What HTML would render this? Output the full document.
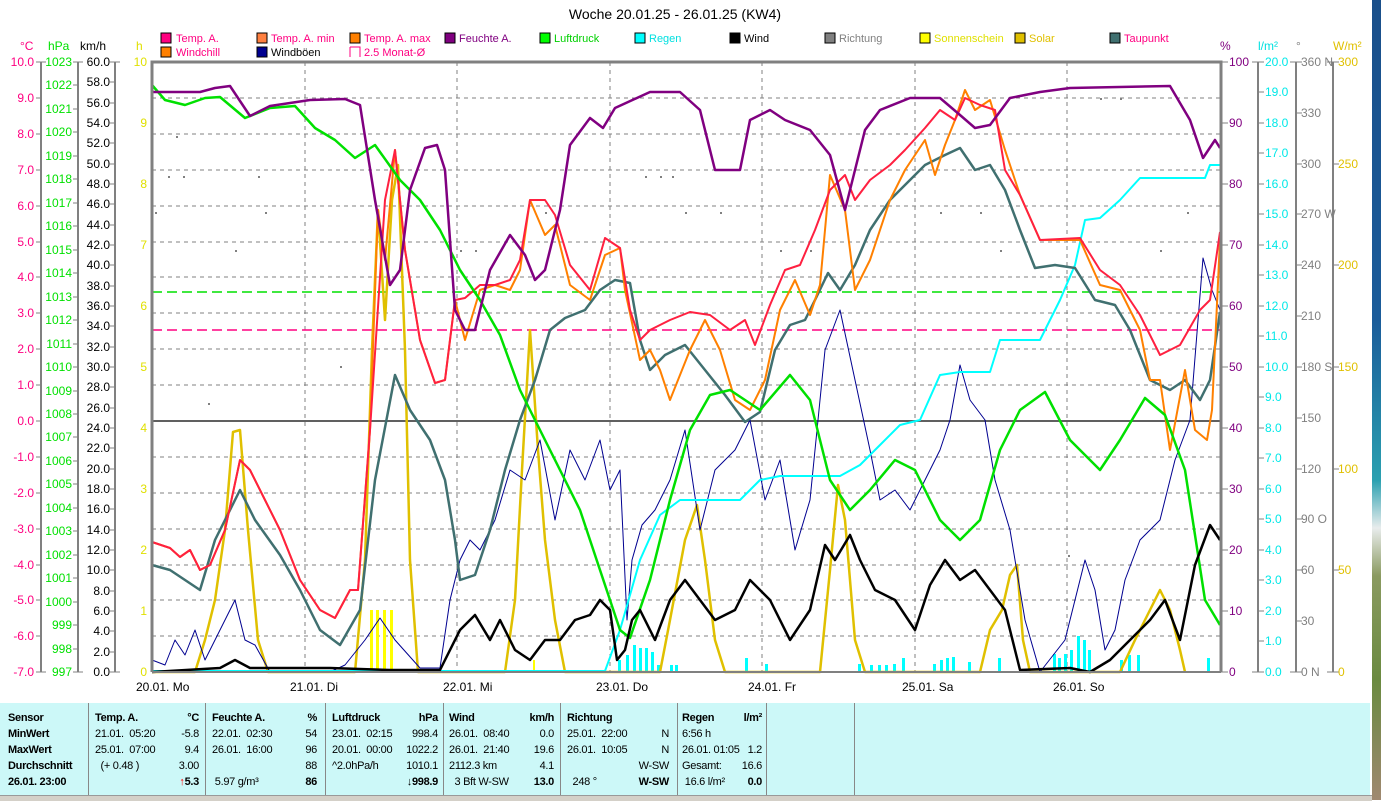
<!DOCTYPE html>
<html><head><meta charset="utf-8"><style>
html,body{margin:0;padding:0;width:1381px;height:800px;overflow:hidden;background:#fff;font-family:"Liberation Sans",sans-serif}
#strip{position:absolute;left:1372px;top:0;width:9px;height:800px;background:linear-gradient(#1a4f8a 0%,#1b5c9a 40%,#2aa0b0 60%,#e8ecec 66%,#8a9a60 72%,#6a8a40 85%,#a08870 100%)}
#tbl{position:absolute;left:0;top:703px;width:1370px;height:92px;background:#ccf8f8}
#bar{position:absolute;left:0;top:795px;width:1372px;height:5px;background:#d4d0c8;border-top:1px solid #999}
.c{position:absolute;top:0;height:92px;font-size:11px;letter-spacing:-0.3px;line-height:16px;padding-top:7px;box-sizing:border-box}
.sep{border-left:1px solid #888}
.r{display:flex;justify-content:space-between;white-space:pre}
b{font-weight:bold}
</style></head><body>
<svg width="1381" height="703" style="position:absolute;left:0;top:0" font-family="Liberation Sans, sans-serif" font-size="12">
<text x="675" y="19" font-size="14" text-anchor="middle">Woche 20.01.25 - 26.01.25 (KW4)</text>
<g font-size="11">
<rect x="161" y="33" width="10" height="10" fill="#ff0080" stroke="#000"/><text x="176" y="42" fill="#ff0080">Temp. A.</text>
<rect x="257" y="33" width="10" height="10" fill="#ff8040" stroke="#000"/><text x="271" y="42" fill="#ff0080">Temp. A. min</text>
<rect x="350" y="33" width="10" height="10" fill="#ff8000" stroke="#000"/><text x="364" y="42" fill="#ff0080">Temp. A. max</text>
<rect x="445" y="33" width="10" height="10" fill="#800080" stroke="#000"/><text x="459" y="42" fill="#800080">Feuchte A.</text>
<rect x="540" y="33" width="10" height="10" fill="#00ff00" stroke="#000"/><text x="554" y="42" fill="#00d000">Luftdruck</text>
<rect x="635" y="33" width="10" height="10" fill="#00ffff" stroke="#000"/><text x="649" y="42" fill="#00e0e0">Regen</text>
<rect x="730" y="33" width="10" height="10" fill="#000" stroke="#000"/><text x="744" y="42">Wind</text>
<rect x="825" y="33" width="10" height="10" fill="#808080" stroke="#000"/><text x="839" y="42" fill="#808080">Richtung</text>
<rect x="920" y="33" width="10" height="10" fill="#ffff00" stroke="#000"/><text x="934" y="42" fill="#e0e000">Sonnenschein</text>
<rect x="1015" y="33" width="10" height="10" fill="#e0c000" stroke="#000"/><text x="1029" y="42" fill="#e0c000">Solar</text>
<rect x="1110" y="33" width="10" height="10" fill="#407070" stroke="#000"/><text x="1124" y="42" fill="#ff0080">Taupunkt</text>
<rect x="161" y="47" width="10" height="10" fill="#ff8000" stroke="#000"/><text x="176" y="56" fill="#ff0080">Windchill</text>
<rect x="257" y="47" width="10" height="10" fill="#000090" stroke="#000"/><text x="271" y="56">Windböen</text>
<path d="M350 47h10v10" fill="none" stroke="#ff0080"/><path d="M350 47v10" stroke="#ff0080"/><text x="364" y="56" fill="#ff0080">2.5 Monat-Ø</text>
</g>
<g font-size="12">
<text x="20" y="50" fill="#ff0080">°C</text><text x="48" y="50" fill="#00e000">hPa</text><text x="80" y="50">km/h</text><text x="136" y="50" fill="#e0e000">h</text>
<text x="1220" y="50" fill="#800080">%</text><text x="1258" y="50" fill="#00e0e0">l/m²</text><text x="1296" y="50" fill="#808080">°</text><text x="1333" y="50" fill="#e0c000">W/m²</text>
</g>
<g stroke="#808080" stroke-width="2" fill="none">
<path d="M41 62V672M78 62V672M115 62V672M1258 62V672M1296 62V672M1333 62V672"/>
</g>
<g stroke="#808080" stroke-width="1">
<path d="M36 62h10M36 98h5M36 134h5M36 170h5M36 206h5M36 242h5M36 277h5M36 313h5M36 349h5M36 385h5M36 421h5M36 457h5M36 493h5M36 529h5M36 565h5M36 600h5M36 636h5M36 672h10"/>
<path d="M73 62h10M73 85h5M73 109h5M73 132h5M73 156h5M73 179h5M73 203h5M73 226h5M73 250h5M73 273h5M73 297h5M73 320h5M73 344h5M73 367h5M73 391h5M73 414h5M73 437h5M73 461h5M73 484h5M73 508h5M73 531h5M73 555h5M73 578h5M73 602h5M73 625h5M73 649h5M73 672h10"/>
<path d="M110 62h10M110 82h5M110 103h5M110 123h5M110 143h5M110 164h5M110 184h5M110 204h5M110 225h5M110 245h5M110 265h5M110 286h5M110 306h5M110 326h5M110 347h5M110 367h5M110 387h5M110 408h5M110 428h5M110 448h5M110 469h5M110 489h5M110 509h5M110 530h5M110 550h5M110 570h5M110 591h5M110 611h5M110 631h5M110 652h5M110 672h10"/>
<path d="M1221 62h7M1221 123h7M1221 184h7M1221 245h7M1221 306h7M1221 367h7M1221 428h7M1221 489h7M1221 550h7M1221 611h7M1221 672h7"/>
<path d="M1252 62h12M1258 92h6M1258 123h6M1258 153h6M1258 184h6M1258 214h6M1258 245h6M1258 275h6M1258 306h6M1258 336h6M1258 367h6M1258 397h6M1258 428h6M1258 458h6M1258 489h6M1258 519h6M1258 550h6M1258 580h6M1258 611h6M1258 641h6M1252 672h12"/>
<path d="M1290 62h12M1296 113h6M1296 164h6M1296 214h6M1296 265h6M1296 316h6M1296 367h6M1296 418h6M1296 469h6M1296 519h6M1296 570h6M1296 621h6M1290 672h12"/>
<path d="M1327 62h12M1333 164h6M1333 265h6M1333 367h6M1333 469h6M1333 570h6M1327 672h12"/>
</g>
<g fill="#ff0080" text-anchor="end">
<text x="34" y="66">10.0</text><text x="34" y="102">9.0</text><text x="34" y="138">8.0</text><text x="34" y="174">7.0</text><text x="34" y="210">6.0</text><text x="34" y="246">5.0</text><text x="34" y="281">4.0</text><text x="34" y="317">3.0</text><text x="34" y="353">2.0</text><text x="34" y="389">1.0</text><text x="34" y="425">0.0</text><text x="34" y="461">-1.0</text><text x="34" y="497">-2.0</text><text x="34" y="533">-3.0</text><text x="34" y="569">-4.0</text><text x="34" y="604">-5.0</text><text x="34" y="640">-6.0</text><text x="34" y="676">-7.0</text>
</g>
<g fill="#00e000" text-anchor="end">
<text x="72" y="66">1023</text><text x="72" y="89">1022</text><text x="72" y="113">1021</text><text x="72" y="136">1020</text><text x="72" y="160">1019</text><text x="72" y="183">1018</text><text x="72" y="207">1017</text><text x="72" y="230">1016</text><text x="72" y="254">1015</text><text x="72" y="277">1014</text><text x="72" y="301">1013</text><text x="72" y="324">1012</text><text x="72" y="348">1011</text><text x="72" y="371">1010</text><text x="72" y="395">1009</text><text x="72" y="418">1008</text><text x="72" y="441">1007</text><text x="72" y="465">1006</text><text x="72" y="488">1005</text><text x="72" y="512">1004</text><text x="72" y="535">1003</text><text x="72" y="559">1002</text><text x="72" y="582">1001</text><text x="72" y="606">1000</text><text x="72" y="629">999</text><text x="72" y="653">998</text><text x="72" y="676">997</text>
</g>
<g fill="#000" text-anchor="end">
<text x="110" y="66">60.0</text><text x="110" y="86">58.0</text><text x="110" y="107">56.0</text><text x="110" y="127">54.0</text><text x="110" y="147">52.0</text><text x="110" y="168">50.0</text><text x="110" y="188">48.0</text><text x="110" y="208">46.0</text><text x="110" y="229">44.0</text><text x="110" y="249">42.0</text><text x="110" y="269">40.0</text><text x="110" y="290">38.0</text><text x="110" y="310">36.0</text><text x="110" y="330">34.0</text><text x="110" y="351">32.0</text><text x="110" y="371">30.0</text><text x="110" y="391">28.0</text><text x="110" y="412">26.0</text><text x="110" y="432">24.0</text><text x="110" y="452">22.0</text><text x="110" y="473">20.0</text><text x="110" y="493">18.0</text><text x="110" y="513">16.0</text><text x="110" y="534">14.0</text><text x="110" y="554">12.0</text><text x="110" y="574">10.0</text><text x="110" y="595">8.0</text><text x="110" y="615">6.0</text><text x="110" y="635">4.0</text><text x="110" y="656">2.0</text><text x="110" y="676">0.0</text>
</g>
<g fill="#e0e000" text-anchor="end">
<text x="147" y="66">10</text><text x="147" y="127">9</text><text x="147" y="188">8</text><text x="147" y="249">7</text><text x="147" y="310">6</text><text x="147" y="371">5</text><text x="147" y="432">4</text><text x="147" y="493">3</text><text x="147" y="554">2</text><text x="147" y="615">1</text><text x="147" y="676">0</text>
</g>
<g fill="#800080">
<text x="1229" y="66">100</text><text x="1229" y="127">90</text><text x="1229" y="188">80</text><text x="1229" y="249">70</text><text x="1229" y="310">60</text><text x="1229" y="371">50</text><text x="1229" y="432">40</text><text x="1229" y="493">30</text><text x="1229" y="554">20</text><text x="1229" y="615">10</text><text x="1229" y="676">0</text>
</g>
<g fill="#00e8e8">
<text x="1265" y="66">20.0</text><text x="1265" y="96">19.0</text><text x="1265" y="127">18.0</text><text x="1265" y="157">17.0</text><text x="1265" y="188">16.0</text><text x="1265" y="218">15.0</text><text x="1265" y="249">14.0</text><text x="1265" y="279">13.0</text><text x="1265" y="310">12.0</text><text x="1265" y="340">11.0</text><text x="1265" y="371">10.0</text><text x="1265" y="401">9.0</text><text x="1265" y="432">8.0</text><text x="1265" y="462">7.0</text><text x="1265" y="493">6.0</text><text x="1265" y="523">5.0</text><text x="1265" y="554">4.0</text><text x="1265" y="584">3.0</text><text x="1265" y="615">2.0</text><text x="1265" y="645">1.0</text><text x="1265" y="676">0.0</text>
</g>
<g fill="#808080">
<text x="1301" y="66">360 N</text><text x="1301" y="117">330</text><text x="1301" y="168">300</text><text x="1301" y="218">270 W</text><text x="1301" y="269">240</text><text x="1301" y="320">210</text><text x="1301" y="371">180 S</text><text x="1301" y="422">150</text><text x="1301" y="473">120</text><text x="1301" y="523">90  O</text><text x="1301" y="574">60</text><text x="1301" y="625">30</text><text x="1301" y="676">0   N</text>
</g>
<g fill="#e0c000">
<text x="1338" y="66">300</text><text x="1338" y="168">250</text><text x="1338" y="269">200</text><text x="1338" y="371">150</text><text x="1338" y="473">100</text><text x="1338" y="574">50</text><text x="1338" y="676">0</text>
</g>
<g stroke="#808080" stroke-dasharray="4,4" stroke-width="1">
<path d="M152 98H1220M152 134H1220M152 170H1220M152 206H1220M152 242H1220M152 277H1220M152 313H1220M152 349H1220M152 385H1220M152 457H1220M152 493H1220M152 529H1220M152 565H1220M152 600H1220M152 636H1220"/>
<path d="M305 62V672M457 62V672M610 62V672M762 62V672M915 62V672M1067 62V672"/>
</g>
<path d="M152 421H1220" stroke="#606060" stroke-width="2"/>
<path d="M152 292H1220" stroke="#00e000" stroke-width="1.5" stroke-dasharray="10,5"/>
<path d="M152 330H1220" stroke="#ff0080" stroke-width="1.5" stroke-dasharray="10,5"/>
<g fill="#808080">
<rect x="155" y="212" width="2" height="2"/><rect x="176" y="136" width="2" height="2"/><rect x="168" y="176" width="2" height="2"/><rect x="183" y="176" width="2" height="2"/><rect x="208" y="403" width="2" height="2"/><rect x="235" y="250" width="2" height="2"/><rect x="258" y="176" width="2" height="2"/><rect x="265" y="212" width="2" height="2"/><rect x="340" y="366" width="2" height="2"/><rect x="460" y="250" width="2" height="2"/><rect x="475" y="250" width="2" height="2"/><rect x="545" y="212" width="2" height="2"/><rect x="645" y="176" width="2" height="2"/><rect x="660" y="176" width="2" height="2"/><rect x="672" y="176" width="2" height="2"/><rect x="685" y="212" width="2" height="2"/><rect x="720" y="212" width="2" height="2"/><rect x="780" y="250" width="2" height="2"/><rect x="810" y="250" width="2" height="2"/><rect x="940" y="212" width="2" height="2"/><rect x="980" y="212" width="2" height="2"/><rect x="1000" y="250" width="2" height="2"/><rect x="1120" y="98" width="2" height="2"/><rect x="1160" y="250" width="2" height="2"/><rect x="1187" y="212" width="2" height="2"/><rect x="1068" y="555" width="2" height="2"/><rect x="1100" y="98" width="2" height="2"/>
</g>
<g fill="#ffff00"><rect x="370" y="610" width="3" height="62"/><rect x="376" y="610" width="3" height="62"/><rect x="383" y="610" width="3" height="62"/><rect x="390" y="610" width="3" height="62"/><rect x="533" y="660" width="2" height="12"/></g>
<g fill="#00ffff">
<rect x="618" y="660" width="3" height="12"/><rect x="626" y="655" width="3" height="17"/><rect x="633" y="645" width="3" height="27"/><rect x="639" y="648" width="3" height="24"/><rect x="645" y="648" width="3" height="24"/><rect x="651" y="652" width="3" height="20"/><rect x="657" y="665" width="3" height="7"/><rect x="670" y="665" width="3" height="7"/><rect x="675" y="665" width="3" height="7"/><rect x="745" y="658" width="3" height="14"/><rect x="765" y="664" width="3" height="8"/><rect x="858" y="664" width="3" height="8"/><rect x="870" y="665" width="3" height="7"/><rect x="878" y="665" width="3" height="7"/><rect x="885" y="665" width="3" height="7"/><rect x="893" y="664" width="3" height="8"/><rect x="902" y="658" width="3" height="14"/><rect x="933" y="664" width="3" height="8"/><rect x="940" y="660" width="3" height="12"/><rect x="946" y="658" width="3" height="14"/><rect x="952" y="657" width="3" height="15"/><rect x="968" y="662" width="3" height="10"/><rect x="998" y="658" width="3" height="14"/><rect x="1053" y="654" width="3" height="18"/><rect x="1058" y="658" width="3" height="14"/><rect x="1064" y="654" width="3" height="18"/><rect x="1070" y="650" width="3" height="22"/><rect x="1077" y="636" width="3" height="36"/><rect x="1083" y="640" width="3" height="32"/><rect x="1088" y="650" width="3" height="22"/><rect x="1120" y="660" width="3" height="12"/><rect x="1128" y="655" width="3" height="17"/><rect x="1137" y="655" width="3" height="17"/><rect x="1207" y="658" width="3" height="14"/>
</g>
<g fill="none" stroke-linejoin="round">
<polyline stroke="#e0c000" stroke-width="2.5" points="152,672 195,672 205,640 215,600 225,530 233,432 240,430 248,530 258,640 268,672 355,672 365,560 372,350 378,210 385,320 392,200 398,165 405,350 410,560 418,672 505,672 515,600 522,470 530,330 538,450 545,540 555,620 565,672 660,672 670,620 685,540 697,505 705,560 715,640 725,672 820,672 830,570 838,485 845,520 855,640 865,672 980,672 990,630 1002,610 1010,575 1017,565 1023,640 1030,672 1120,672 1135,640 1150,610 1160,590 1170,610 1180,650 1185,672"/>
<polyline stroke="#000090" stroke-width="1" points="152,660 165,665 175,640 185,655 195,630 205,660 215,640 225,620 235,600 245,640 255,645 270,672 330,672 345,665 365,640 380,618 395,640 420,668 440,668 450,600 460,560 470,540 480,550 495,520 510,470 525,480 540,440 555,520 570,450 585,480 600,440 610,490 620,470 627,620 632,560 642,525 655,510 670,480 685,430 700,530 715,470 735,450 750,420 765,500 780,460 795,550 810,500 825,350 840,310 855,380 870,450 880,500 895,490 910,510 925,480 940,450 950,420 960,365 970,400 985,420 995,480 1010,530 1025,620 1040,672 1065,640 1085,560 1095,590 1105,650 1115,630 1125,580 1140,540 1160,520 1175,460 1190,420 1203,258 1212,290 1220,310"/>
<polyline stroke="#00ffff" stroke-width="2" points="152,671 605,671 620,630 640,560 660,515 680,500 740,500 760,480 780,476 840,476 860,465 880,445 900,425 920,420 940,375 960,372 990,372 1000,340 1040,340 1060,300 1075,265 1085,220 1100,218 1120,200 1140,178 1205,178 1210,165 1220,165"/>
<polyline stroke="#407070" stroke-width="2.5" points="152,565 170,570 185,580 200,590 215,540 240,490 255,520 280,555 300,590 320,630 340,645 360,610 375,480 395,375 410,410 430,440 445,480 455,540 460,580 475,575 490,530 505,470 520,420 535,380 550,330 565,318 585,310 600,290 615,280 630,283 640,340 650,370 665,355 685,345 705,370 725,395 745,422 760,412 775,350 790,325 805,320 815,300 828,273 840,290 855,265 870,230 890,200 910,180 925,165 945,155 960,148 975,170 990,165 1005,190 1020,230 1035,268 1055,265 1075,268 1095,300 1115,305 1130,330 1150,380 1170,390 1185,380 1200,400 1210,380 1220,312"/>
<polyline stroke="#ff8000" stroke-width="2" points="152,542 170,548 180,557 190,550 200,570 210,565 225,530 240,460 250,470 265,500 280,530 300,580 320,610 335,618 350,590 358,590 370,430 378,210 385,260 395,150 405,250 420,340 435,383 445,380 455,300 465,340 480,290 495,285 510,290 520,270 530,200 545,235 555,225 570,285 590,300 605,255 620,248 625,290 640,360 650,350 660,370 670,400 690,350 705,320 720,350 735,400 750,410 765,380 780,310 795,280 810,315 820,285 830,175 845,210 855,290 870,260 890,200 905,170 925,140 935,175 945,145 955,120 965,90 975,110 990,100 1005,150 1020,195 1040,240 1080,240 1100,285 1120,290 1140,330 1150,380 1160,380 1170,450 1185,370 1195,430 1207,440 1212,410 1220,240"/>
<polyline stroke="#ff2040" stroke-width="2" points="152,542 170,548 180,557 190,550 200,570 210,565 225,530 240,460 250,470 265,500 280,530 300,580 320,610 335,618 350,590 358,590 370,430 385,200 395,150 405,250 420,340 435,383 445,380 455,300 465,298 480,285 495,285 510,280 520,260 530,200 545,200 555,215 570,265 590,290 605,238 620,248 630,310 640,340 650,330 670,320 690,312 710,315 730,330 745,320 755,345 770,305 785,270 800,265 815,230 830,190 845,175 855,200 870,180 890,165 905,150 925,128 940,110 955,120 965,98 980,105 995,110 1005,170 1020,195 1040,240 1080,238 1100,270 1120,285 1140,315 1160,355 1180,345 1200,310 1210,300 1220,232"/>
<polyline stroke="#00e000" stroke-width="2.5" points="152,85 165,100 185,105 205,98 220,97 245,118 270,108 295,106 315,128 335,140 355,158 375,145 400,180 420,200 440,230 460,270 480,300 500,335 520,390 540,430 560,470 580,510 600,570 620,630 630,638 650,580 670,500 690,430 710,395 730,390 760,410 790,375 810,400 830,480 850,510 870,490 895,460 915,470 940,520 960,540 980,520 1000,450 1020,410 1045,392 1070,440 1100,470 1120,440 1145,398 1165,415 1185,470 1205,600 1220,625"/>
<polyline stroke="#800080" stroke-width="2.5" points="152,92 200,92 215,88 230,86 250,116 270,106 310,100 345,99 360,105 375,200 390,285 400,270 410,190 425,148 437,145 445,170 455,310 465,330 475,330 490,270 510,235 525,255 535,280 545,270 560,210 570,145 590,118 603,128 615,108 650,92 680,92 700,110 715,170 740,170 750,120 770,110 785,120 810,130 830,155 845,210 865,130 880,110 910,98 940,98 960,115 975,128 990,125 1010,98 1040,92 1070,88 1170,86 1190,120 1203,158 1215,140 1220,148"/>
<polyline stroke="#000" stroke-width="2.5" points="152,672 220,668 235,660 250,668 330,668 390,670 440,670 460,630 475,615 490,640 500,620 515,650 530,660 545,640 560,640 575,620 590,615 600,600 610,610 617,660 625,650 632,620 640,610 655,640 670,600 685,580 700,600 715,620 735,610 750,580 770,600 790,640 810,610 825,545 835,560 850,535 860,560 875,590 895,600 915,630 930,585 945,560 960,580 975,570 990,590 1005,610 1020,670 1070,668 1090,672 1110,660 1130,640 1150,620 1165,600 1180,640 1195,565 1210,525 1220,540"/>
</g>
<path d="M152 672V62H1221V672" fill="none" stroke="#808080" stroke-width="3"/>
<path d="M152 672H1221" stroke="#808080" stroke-width="2"/>
<g font-size="12">
<text x="136" y="691">20.01.  Mo</text><text x="290" y="691">21.01.  Di</text><text x="443" y="691">22.01.  Mi</text><text x="596" y="691">23.01.  Do</text><text x="748" y="691">24.01.  Fr</text><text x="902" y="691">25.01.  Sa</text><text x="1053" y="691">26.01.  So</text>
</g>
</svg>
<div id="tbl">
<div class="c" style="left:8px;width:78px"><b>Sensor<br>MinWert<br>MaxWert<br>Durchschnitt<br>26.01. 23:00</b></div>
<div class="c sep" style="left:88px;width:117px;padding-left:6px;padding-right:6px">
<div class="r"><b>Temp. A.</b><b>°C</b></div><div class="r"><span>21.01.  05:20</span><span>-5.8</span></div><div class="r"><span>25.01.  07:00</span><span>9.4</span></div><div class="r"><span>  (+ 0.48 )</span><span>3.00</span></div><div class="r"><span></span><b><span style="color:#f00">↑</span>5.3</b></div></div>
<div class="c sep" style="left:205px;width:120px;padding-left:6px;padding-right:8px">
<div class="r"><b>Feuchte A.</b><b>%</b></div><div class="r"><span>22.01.  02:30</span><span>54</span></div><div class="r"><span>26.01.  16:00</span><span>96</span></div><div class="r"><span></span><span>88</span></div><div class="r"><span> 5.97 g/m³</span><b>86</b></div></div>
<div class="c sep" style="left:325px;width:118px;padding-left:6px;padding-right:5px">
<div class="r"><b>Luftdruck</b><b>hPa</b></div><div class="r"><span>23.01.  02:15</span><span>998.4</span></div><div class="r"><span>20.01.  00:00</span><span>1022.2</span></div><div class="r"><span>^2.0hPa/h</span><span>1010.1</span></div><div class="r"><span></span><b>↓998.9</b></div></div>
<div class="c sep" style="left:443px;width:117px;padding-left:5px;padding-right:6px">
<div class="r"><b>Wind</b><b>km/h</b></div><div class="r"><span>26.01.  08:40</span><span>0.0</span></div><div class="r"><span>26.01.  21:40</span><span>19.6</span></div><div class="r"><span>2112.3 km</span><span>4.1</span></div><div class="r"><span>  3 Bft W-SW</span><b>13.0</b></div></div>
<div class="c sep" style="left:560px;width:117px;padding-left:6px;padding-right:8px">
<div class="r"><b>Richtung</b><span></span></div><div class="r"><span>25.01.  22:00</span><span>N</span></div><div class="r"><span>26.01.  10:05</span><span>N</span></div><div class="r"><span></span><span>W-SW</span></div><div class="r"><span>  248 °</span><b>W-SW</b></div></div>
<div class="c sep" style="left:677px;width:89px;padding-left:4px;padding-right:4px">
<div class="r"><b>Regen</b><b>l/m²</b></div><div class="r"><span>6:56 h</span><span></span></div><div class="r"><span>26.01. 01:05</span><span>1.2</span></div><div class="r"><span>Gesamt:</span><span>16.6</span></div><div class="r"><span> 16.6 l/m²</span><b>0.0</b></div></div>
<div class="c sep" style="left:766px;width:88px"></div>
<div class="c sep" style="left:854px;width:1px"></div>
</div>
<div id="bar"></div>
<div id="strip"></div>
</body></html>
